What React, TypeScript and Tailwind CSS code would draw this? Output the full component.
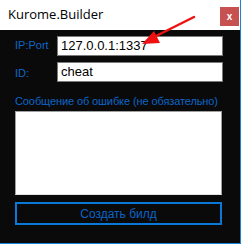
import React from 'react';

const App: React.FC = () => {
  return (
    <div className="w-[242px] h-[245px] bg-white font-['Liberation_Sans',Arial,sans-serif]">
      <div className="relative w-[241px] h-[244px] bg-[#0a0a0a] border-r border-b border-[#1883d7] flex flex-col">
        <div className="h-[30px] bg-white flex items-center justify-between pl-[8px] pr-[1px]">
          <span className="text-[13px] text-black font-['Open_Sans',sans-serif] mt-[-1px]">Kurome.Builder</span>
          <div className="w-[19px] h-[19px] bg-[#c75050] flex items-center justify-center text-white text-[10px] font-bold mt-[2px]">x</div>
        </div>

        <div className="flex flex-col px-[15px] pt-[6px]">
          <div className="flex items-center h-[19px]">
            <span className="w-[42px] text-[11px] text-[#0d66c8]">IP:Port</span>
            <div className="w-[166px] h-[20px] bg-white border border-[#7a7a7a] flex items-center px-[3px] text-[13px] text-black">127.0.0.1:1337</div>
          </div>
          <div className="flex items-center h-[19px] mt-[7px]">
            <span className="w-[42px] text-[11px] text-[#0d66c8] mt-[4px]">ID:</span>
            <div className="w-[166px] h-[20px] bg-white border border-[#7a7a7a] flex items-center px-[3px] text-[13px] text-black">cheat</div>
          </div>
          <span className="text-[11px] text-[#0d66c8] mt-[14px] leading-[13px] tracking-[-0.1px]">Сообщение об ошибке (не обязательно)</span>
          <div className="w-[207px] h-[84px] bg-white border border-[#a0a0a0] border-b-[#e3e3e3] mt-[3px]" />
          <div className="w-[207px] h-[23px] border-2 border-[#0a78d7] flex items-center justify-center text-[12px] text-[#0a64c8] mt-[7px]">Создать билд</div>
        </div>

        <svg className="absolute left-[138px] top-[14px]" width="60" height="34" viewBox="0 0 60 34">
          <line x1="56" y1="3" x2="14" y2="24" stroke="#ee1111" strokeWidth="2.5" strokeLinecap="round" />
          <polygon points="4,30 16,17 22,29" fill="#ee1111" />
        </svg>
      </div>
    </div>
  );
};

export default App;
